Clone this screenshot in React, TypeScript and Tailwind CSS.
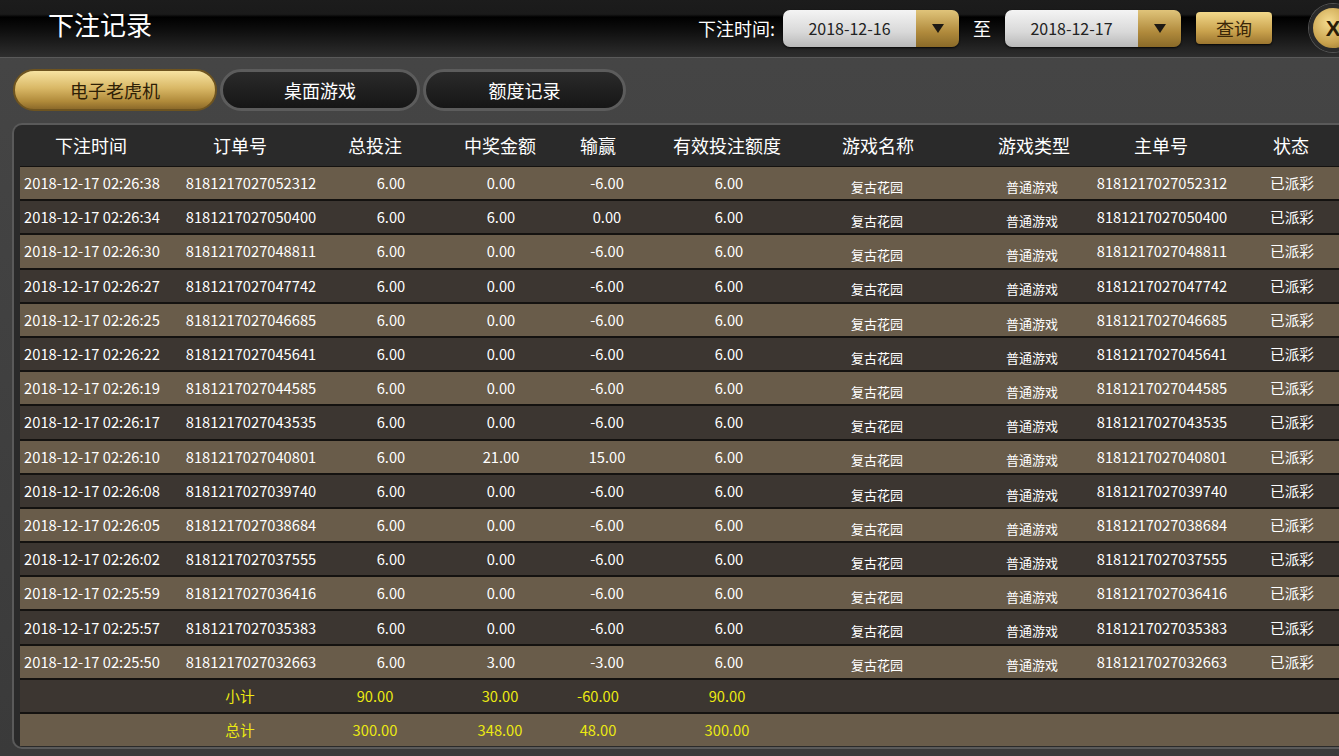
const rows = [
  ["2018-12-17 02:26:38", "8181217027052312", "6.00", "0.00", "-6.00", "6.00"],
  ["2018-12-17 02:26:34", "8181217027050400", "6.00", "6.00", "0.00", "6.00"],
  ["2018-12-17 02:26:30", "8181217027048811", "6.00", "0.00", "-6.00", "6.00"],
  ["2018-12-17 02:26:27", "8181217027047742", "6.00", "0.00", "-6.00", "6.00"],
  ["2018-12-17 02:26:25", "8181217027046685", "6.00", "0.00", "-6.00", "6.00"],
  ["2018-12-17 02:26:22", "8181217027045641", "6.00", "0.00", "-6.00", "6.00"],
  ["2018-12-17 02:26:19", "8181217027044585", "6.00", "0.00", "-6.00", "6.00"],
  ["2018-12-17 02:26:17", "8181217027043535", "6.00", "0.00", "-6.00", "6.00"],
  ["2018-12-17 02:26:10", "8181217027040801", "6.00", "21.00", "15.00", "6.00"],
  ["2018-12-17 02:26:08", "8181217027039740", "6.00", "0.00", "-6.00", "6.00"],
  ["2018-12-17 02:26:05", "8181217027038684", "6.00", "0.00", "-6.00", "6.00"],
  ["2018-12-17 02:26:02", "8181217027037555", "6.00", "0.00", "-6.00", "6.00"],
  ["2018-12-17 02:25:59", "8181217027036416", "6.00", "0.00", "-6.00", "6.00"],
  ["2018-12-17 02:25:57", "8181217027035383", "6.00", "0.00", "-6.00", "6.00"],
  ["2018-12-17 02:25:50", "8181217027032663", "6.00", "3.00", "-3.00", "6.00"],
];

const headW = ["w-[142px]", "w-[156px]", "w-[114px]", "w-[136px]", "w-[60px]", "w-[198px]", "w-[104px]", "w-[208px]", "w-[46px]", "w-[214px]"];
const dataW = ["w-[142px]", "w-[178px]", "w-[102px]", "w-[118px]", "w-[94px]", "w-[150px]", "w-[146px]", "w-[164px]", "w-[96px]", "w-[164px]"];
const heads = ["下注时间", "订单号", "总投注", "中奖金额", "输赢", "有效投注额度", "游戏名称", "游戏类型", "主单号", "状态"];

function Picker({ value }: { value: string }) {
  return (
    <div className="flex h-[37px] w-[176px] rounded-[7px] overflow-hidden shadow-[0_1px_2px_rgba(0,0,0,0.8)]">
      <div className="flex-1 flex items-center justify-center text-[16px] text-[#222] bg-[linear-gradient(to_bottom,#f4f4f4,#d8d8d8_60%,#b8b8b8)]">{value}</div>
      <div className="w-[43px] flex items-center justify-center bg-[linear-gradient(to_bottom,#e0c47a,#b08a3c_60%,#8a6a28)]">
        <svg width="12" height="9" viewBox="0 0 12 9"><path d="M0 0h12L6 9z" fill="#1e1a14" /></svg>
      </div>
    </div>
  );
}

export default function App() {
  return (
    <div className="w-[1339px] h-[756px] overflow-hidden bg-[linear-gradient(to_bottom,#464646,#3a3a3a)] font-['Noto_Sans_CJK_SC','Noto_Sans',sans-serif] text-white">
      <div className="h-[58px] flex items-center border-b border-[#5a5a5a] bg-[linear-gradient(to_bottom,#1c1c1c_0%,#1a1a1a_25%,#000_30%,#0c0c0c_50%,#2e2e2e_100%)]">
        <div className="ml-[48px] text-[26px] leading-none -mt-[10px]">下注记录</div>
        <div className="ml-auto flex items-center -mt-[1px]">
          <span className="text-[18px] mr-[8px]">下注时间:</span>
          <Picker value="2018-12-16" />
          <span className="text-[18px] mx-[14px]">至</span>
          <Picker value="2018-12-17" />
          <div className="ml-[15px] w-[76px] h-[32px] rounded-[4px] flex items-center justify-center text-[18px] text-[#3a2608] bg-[linear-gradient(to_bottom,#f2d88a,#c9a24d_60%,#9c7630)] shadow-[0_1px_2px_rgba(0,0,0,0.8)]">查询</div>
          <div className="ml-[37px] -mr-[18px] w-[48px] h-[48px] rounded-full border-[4px] border-[#2a2a2a] ring-1 ring-[#555] flex items-center justify-center bg-[radial-gradient(circle_at_40%_35%,#f5dc90,#c9a24d_60%,#8a6a28)]">
            <span className="text-[22px] font-bold text-[#2a1e08] font-['Liberation_Sans',sans-serif]">X</span>
          </div>
        </div>
      </div>

      <div className="flex gap-[3px] pl-[13px] pt-[11px]">
        <div className="w-[204px] h-[42px] rounded-full border-2 border-[#6e5420] flex items-center justify-center text-[18px] text-[#2e2006] bg-[linear-gradient(to_bottom,#f7e3a2,#d9b866_45%,#b08a3a_80%,#8c6a2a)]">电子老虎机</div>
        <div className="w-[200px] h-[42px] rounded-full border-[3px] border-[#5c5c5c] flex items-center justify-center text-[18px] bg-[linear-gradient(to_bottom,#2a2a2a,#161616)]">桌面游戏</div>
        <div className="w-[203px] h-[42px] rounded-full border-[3px] border-[#5c5c5c] flex items-center justify-center text-[18px] bg-[linear-gradient(to_bottom,#2a2a2a,#161616)]">额度记录</div>
      </div>

      <div className="mt-[12px] ml-[12px] w-[1400px] border-2 border-r-0 border-[#5a5a5a] rounded-l-[10px] bg-[#2a2a2a] pl-[6px] pb-[1px]">
        <div className="flex h-[41px] items-center text-[18px]">
          {heads.map((h, i) => (
            <div key={h} className={`${headW[i]} shrink-0 flex justify-center whitespace-nowrap`}>{h}</div>
          ))}
        </div>
        <div className="flex flex-col gap-[2px] pt-[1px] bg-[#141210]">
          {rows.map((r, ri) => (
            <div key={ri} className={`flex h-[32.2px] items-center text-[14.7px] ${ri % 2 === 0 ? "bg-[#695c4a]" : "bg-[#3c3631]"}`}>
              {[...r, "复古花园", "普通游戏", r[1], "已派彩"].map((c, ci) => (
                <div key={ci} className={`${dataW[ci]} shrink-0 flex justify-center whitespace-nowrap ${ci === 6 || ci === 7 ? "text-[13px] pt-[7px]" : ""} ${ci === 0 ? "pl-[2px]" : ""}`}>{c}</div>
              ))}
            </div>
          ))}
          {[["小计", "90.00", "30.00", "-60.00", "90.00"], ["总计", "300.00", "348.00", "48.00", "300.00"]].map((s, si) => (
            <div key={si} className={`flex h-[32.2px] items-center text-[14.7px] text-[#ecea12] ${si === 0 ? "bg-[#3c3631]" : "bg-[#695c4a]"}`}>
              <div className={`${headW[0]} shrink-0`} />
              {s.map((c, ci) => (
                <div key={ci} className={`${headW[ci + 1]} shrink-0 flex justify-center whitespace-nowrap`}>{c}</div>
              ))}
            </div>
          ))}
        </div>
      </div>
    </div>
  );
}
